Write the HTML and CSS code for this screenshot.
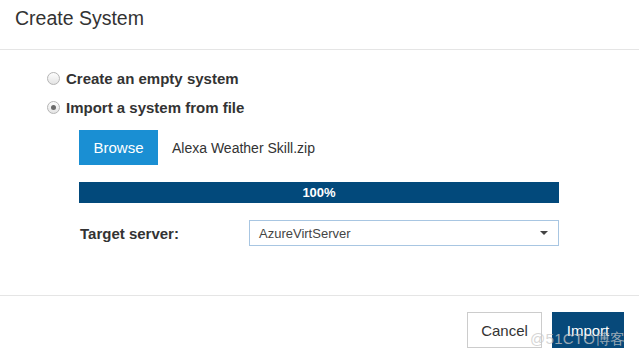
FILE: index.html
```html
<!DOCTYPE html>
<html>
<head>
<meta charset="utf-8">
<link rel="stylesheet" href="styles.css">
</head>
<body>
<div class="dialog">
  <div class="header"><h1 class="title">Create System</h1></div>
  <div class="content">
    <label class="radio-row"><span class="radio"></span><span>Create an empty system</span></label>
    <label class="radio-row second"><span class="radio checked"></span><span>Import a system from file</span></label>
    <div class="indent">
      <div class="file-row">
        <button class="btn-browse">Browse</button>
        <span class="filename">Alexa Weather Skill.zip</span>
      </div>
      <div class="progress"><span>100%</span></div>
      <div class="target-row">
        <span class="target-label">Target server:</span>
        <div class="select"><span>AzureVirtServer</span><span class="caret"></span></div>
      </div>
    </div>
  </div>
  <div class="footer">
    <button class="btn-cancel">Cancel</button>
    <button class="btn-import">Import</button>
  </div>
  <div class="watermark">@51CTO博客</div>
</div>
</body>
</html>
```
FILE: styles.css
```css
html, body { margin: 0; padding: 0; background: #fff; }
body { font-family: "Liberation Sans", Arial, sans-serif; color: #333; }
.dialog { position: relative; width: 639px; height: 359px; overflow: hidden; display: flex; flex-direction: column; }
.header { height: 49px; border-bottom: 1px solid #e5e5e5; padding: 0 15px; box-sizing: content-box; }
.title { margin: 0; padding-top: 6px; font-size: 19.5px; font-weight: normal; line-height: 24px; color: #333; }
.content { height: 245px; padding: 18px 0 0 47px; box-sizing: border-box; display: flex; flex-direction: column; }
.radio-row { display: flex; align-items: center; gap: 6px; height: 20px; font-size: 15px; font-weight: bold; color: #333; }
.radio-row.second { margin-top: 9px; }
.radio { width: 11px; height: 11px; border-radius: 50%; border: 1px solid #b5b5b5; background: linear-gradient(#fdfdfd, #e4e4e4); position: relative; }
.radio.checked::after { content: ""; position: absolute; left: 3px; top: 3px; width: 5px; height: 5px; border-radius: 50%; background: #6a6a6a; }
.indent { padding-left: 32px; margin-top: 13px; width: 480px; }
.file-row { display: flex; align-items: center; gap: 14px; height: 35px; }
.btn-browse { width: 79px; height: 35px; border: none; background: #1a8fd3; color: #fff; font-family: "Liberation Sans", Arial, sans-serif; font-size: 15px; padding: 0; }
.filename { font-size: 14px; color: #333; }
.progress { margin-top: 17px; height: 21px; background: #02497b; color: #fff; font-size: 13px; font-weight: bold; display: flex; align-items: center; justify-content: center; }
.target-row { margin-top: 17px; display: flex; align-items: center; height: 26px; }
.target-label { width: 169px; padding-left: 1px; font-size: 15px; font-weight: bold; color: #333; }
.select { flex: 1; height: 26px; box-sizing: border-box; border: 1px solid #a8c6e2; display: flex; align-items: center; justify-content: space-between; padding: 0 10px 0 9px; font-size: 13px; color: #444; }
.caret { width: 0; height: 0; border-left: 4px solid transparent; border-right: 4px solid transparent; border-top: 4px solid #444; }
.footer { border-top: 1px solid #e5e5e5; flex: 1; display: flex; justify-content: flex-end; align-items: flex-start; padding: 16px 15px 0 0; gap: 10px; }
.footer button { height: 36px; font-family: "Liberation Sans", Arial, sans-serif; font-size: 15px; padding: 0; }
.btn-cancel { width: 75px; background: #fff; border: 1px solid #ccc; color: #333; }
.btn-import { width: 72px; background: #07497a; border: 1px solid #07497a; color: #fff; }
.watermark { position: absolute; left: 530px; top: 330px; font-size: 15px; color: rgba(200, 200, 200, 0.75); letter-spacing: 0.3px; }
```
